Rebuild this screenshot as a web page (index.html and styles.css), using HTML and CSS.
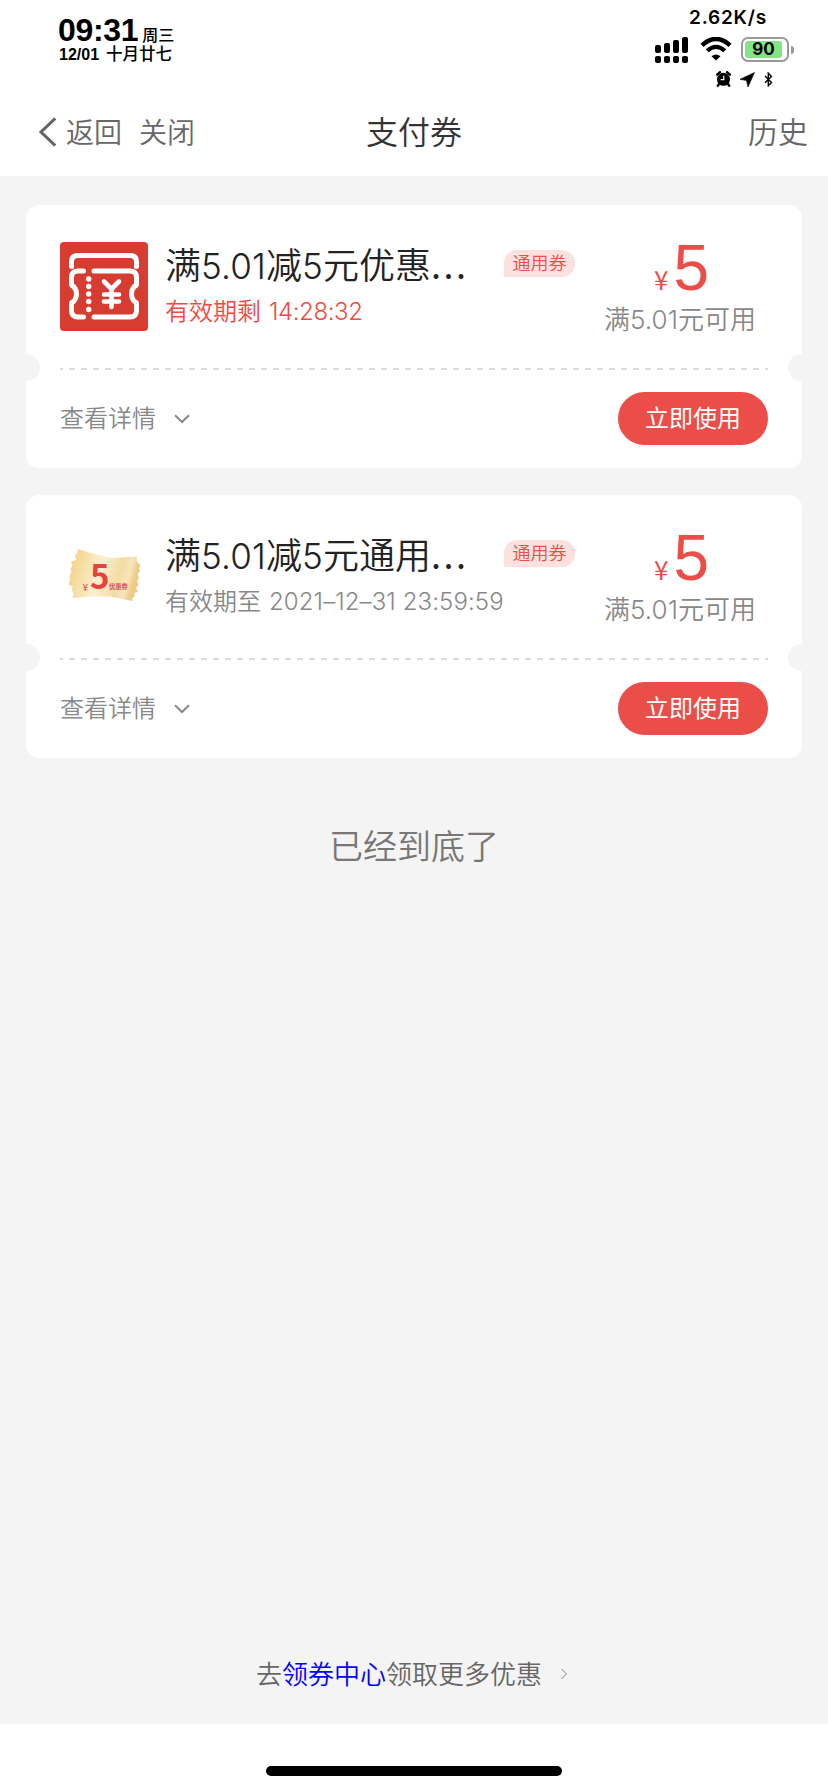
FILE: index.html
```html
<!DOCTYPE html>
<html lang="zh-CN">
<head>
<meta charset="utf-8">
<title>支付券</title>
<link rel="stylesheet" href="styles.css">
</head>
<body>
<div class="screen">
  <header class="top">
    <div class="status">
      <div class="clock">
        <div class="time-row"><span class="time">09:31</span><span class="weekday">周三</span></div>
        <div class="date-row"><span class="date">12/01</span><span class="lunar">十月廿七</span></div>
      </div>
      <div class="indicators">
        <div class="speed">2.62K/s</div>
        <div class="signals">
          <svg class="bars" width="33" height="26" viewBox="0 0 33 26">
            <rect x="0" y="8" width="6" height="8" rx="2"/><rect x="9" y="6" width="6" height="10" rx="2"/><rect x="18" y="3" width="6" height="13" rx="2"/><rect x="27" y="0" width="6" height="16" rx="2"/>
            <rect x="0" y="19" width="6" height="7" rx="2"/><rect x="9" y="19" width="6" height="7" rx="2"/><rect x="18" y="19" width="6" height="7" rx="2"/><rect x="27" y="19" width="6" height="7" rx="2"/>
          </svg>
          <svg class="wifi" width="32" height="24" viewBox="0 0 32 24">
            <path d="M2 8.3Q16-4.600 30 8.300" fill="none" stroke="#000" stroke-width="4.400"/>
            <path d="M7.200 13.800Q16 6 24.800 13.800" fill="none" stroke="#000" stroke-width="4.200"/>
            <path d="M11.500 19.300Q16 15.500 20.500 19.300L16 23.600Z"/>
          </svg>
          <div class="battery"><div class="level">90</div></div><i class="battery-tip"></i>
        </div>
        <div class="mini">
          <svg width="15" height="16" viewBox="0 0 15 16"><circle cx="7.500" cy="8.300" r="6.500"/><path d="M1.200 3.700 4 1.200M13.800 3.700 11 1.200M3 13 1.800 14.700M12 13l1.200 1.700" stroke="#000" stroke-width="2.400" stroke-linecap="round"/><path d="M7.800 4.800v3.900H4.700" fill="none" stroke="#fff" stroke-width="1.200"/></svg>
          <svg width="15" height="15" viewBox="0 0 15 15"><path d="M14.500.5 0 7.300l6.500 1.200L8 15Z" stroke="#000" stroke-width=".6"/></svg>
          <svg width="9" height="15" viewBox="0 0 9 15"><path d="M1 4 7.500 10.500 4.300 13.800V1.200L7.500 4.400 1 10.800" fill="none" stroke="#000" stroke-width="1.400"/></svg>
        </div>
      </div>
    </div>
    <nav class="nav">
      <div class="nav-left">
        <svg width="18" height="30" viewBox="0 0 18 30"><path d="M16.300 1.300 2 15l14.300 13.700" fill="none" stroke="#666" stroke-width="3"/></svg>
        <span class="back">返回</span><span class="close">关闭</span>
      </div>
      <h1 class="title">支付券</h1>
      <span class="history">历史</span>
    </nav>
  </header>

  <main class="content">
    <section class="card">
      <div class="card-main">
        <svg class="logo" width="88" height="89" viewBox="0 0 88 89">
          <rect width="88" height="89" rx="4" fill="#d63d30"/>
          <g fill="none" stroke="#fff" stroke-width="5" stroke-linecap="round" stroke-linejoin="round">
            <path d="M11.500 24.500V20q0-6.500 6.500-6.500h52q6.500 0 6.500 6.500v4.500"/>
            <path d="M23.500 29H18q-6.500 0-6.500 6.500V43q5 3 5 9t-5 9v7.500q0 6.500 6.500 6.500h5.500"/>
            <path d="M34 29h36q6.500 0 6.500 6.500V43q-5 3-5 9t5 9v7.500q0 6.500-6.500 6.500H34"/>
            <path d="M44 39.500 51.500 47 59 39.500M51.500 48v17M44 52.500h15M44 59.500h15" stroke-width="4.600"/>
          </g>
          <g fill="#fff"><circle cx="28.700" cy="37" r="2.700"/><circle cx="28.700" cy="44.500" r="2.700"/><circle cx="28.700" cy="52" r="2.700"/><circle cx="28.700" cy="59.500" r="2.700"/><circle cx="28.700" cy="67.500" r="2.700"/></g>
        </svg>
        <div class="info">
          <div class="name">满<span class="num">5.01</span>减<span class="num">5</span>元优惠<span class="dots">...</span></div>
          <div class="expiry urgent">有效期剩<span class="when">14:28:32</span></div>
        </div>
        <span class="tag">通用券</span>
        <div class="worth">
          <div class="price"><span class="yen">¥</span><span class="amount">5</span></div>
          <div class="rule">满<span class="num">5.01</span>元可用</div>
        </div>
      </div>
      <div class="tear"></div>
      <div class="card-foot">
        <span class="details">查看详情</span>
        <svg class="chevron" width="16" height="10" viewBox="0 0 16 10"><path d="M1 1.200 8 8l7-6.800" fill="none" stroke="#888" stroke-width="2"/></svg>
        <button class="use">立即使用</button>
      </div>
    </section>

    <section class="card">
      <div class="card-main">
        <svg class="logo" width="88" height="89" viewBox="0 0 88 89">
          <defs><linearGradient id="gold" x1="0" y1="0" x2="1" y2=".2"><stop offset="0" stop-color="#efcb80"/><stop offset=".15" stop-color="#f5d793"/><stop offset=".5" stop-color="#fcefd0"/><stop offset=".78" stop-color="#f4dba0"/><stop offset=".9" stop-color="#f7e5bd"/><stop offset="1" stop-color="#eccb83"/></linearGradient></defs>
          <path d="M17.500 17 38 23 52 26 77 24.500 76.500 28 78 31 80.500 33 79 36 80 39 77.500 42 79 46 77 49 78.500 53 76 56 78 60 74 61 75 64 72 67 72.500 69 50 64.500 32 64.500 12.500 66 13.500 62 12 58 12.500 54 8.500 53 10 48 9.500 44 11.500 40 10.500 37 12.500 34 11 30 16 28 15 23 17.500 21Z" fill="url(#gold)"/>
          <text x="22.500" y="58.500" class="pic-yen">¥</text>
          <text x="30" y="57" class="pic-five">5</text>
          <text x="49" y="57" class="pic-label">优惠券</text>
        </svg>
        <div class="info">
          <div class="name">满<span class="num">5.01</span>减<span class="num">5</span>元通用<span class="dots">...</span></div>
          <div class="expiry">有效期至<span class="when full-date">2021–12–31 23:59:59</span></div>
        </div>
        <span class="tag">通用券</span>
        <div class="worth">
          <div class="price"><span class="yen">¥</span><span class="amount">5</span></div>
          <div class="rule">满<span class="num">5.01</span>元可用</div>
        </div>
      </div>
      <div class="tear"></div>
      <div class="card-foot">
        <span class="details">查看详情</span>
        <svg class="chevron" width="16" height="10" viewBox="0 0 16 10"><path d="M1 1.200 8 8l7-6.800" fill="none" stroke="#888" stroke-width="2"/></svg>
        <button class="use">立即使用</button>
      </div>
    </section>

    <p class="end">已经到底了</p>
    <div class="more">去<a>领券中心</a>领取更多优惠<svg width="8" height="12" viewBox="0 0 8 12"><path d="M1.500 1 6.500 6l-5 5" fill="none" stroke="#888" stroke-width="1"/></svg></div>
  </main>
  <footer class="home"><i class="home-bar"></i></footer>
</div>
</body>
</html>
```

FILE: styles.css
```css
* { box-sizing: border-box; }
body {
  margin: 0;
  background: #fff;
  font-family: "Noto Sans CJK SC", sans-serif;
  font-weight: 350;
}
.screen { display: flex; flex-direction: column; width: 828px; height: 1792px; overflow: hidden; }

/* status bar */
.top { height: 176px; flex: none; background: #fff; color: #000; }
.status { display: flex; justify-content: space-between; height: 96px; padding: 0 34px 0 58px; }
.clock { padding-top: 15px; }
.time-row { display: flex; align-items: baseline; height: 30px; line-height: 30px; }
.time { font: bold 32px/30px "Liberation Sans", Arial, sans-serif; letter-spacing: -.3px; }
.weekday { margin-left: 4px; font-size: 16px; font-weight: 500; }
.date-row { display: flex; align-items: baseline; height: 17px; line-height: 17px; padding-left: 1px; }
.date { font: bold 16px/17px "Liberation Sans", Arial, sans-serif; }
.lunar { margin-left: 7px; font-size: 16.500px; font-weight: 500; }
.indicators { width: 140px; }
.speed { height: 37px; padding: 7px 0 0 35px; font: 600 19px/22px Inter, sans-serif; letter-spacing: .8px; white-space: nowrap; }
.signals { display: flex; align-items: flex-start; }
.bars { margin-left: 1px; }
.wifi { margin-left: 12px; }
.battery { width: 48px; height: 25px; margin-left: 9px; padding: 2px; border: 2px solid #999; border-radius: 7px; }
.level { width: 37px; height: 17px; margin: 0 auto 0 0; border-radius: 3px; background: #83e483; font: 700 17px/17px Inter, sans-serif; text-align: center; }
.battery-tip { width: 3px; height: 8px; margin: 9px 0 0 2px; border-radius: 0 4px 4px 0; background: #999; }
.mini { display: flex; align-items: center; gap: 9px; height: 16px; margin-top: 8px; padding-left: 62px; }

/* navigation */
.nav { display: grid; grid-template-columns: 1fr auto 1fr; align-items: center; height: 72px; padding: 0 20px 0 39px; color: #666; }
.nav-left { display: flex; align-items: center; width: 200px; }
.back { margin: -2px 0 0 9px; font-size: 28px; line-height: 40px; }
.close { margin: -2px 0 0 17px; font-size: 28px; line-height: 40px; }
.title { margin: -4px 0 0 -19px; color: #333; font-size: 32px; line-height: 40px; font-weight: 350; }
.history { justify-self: end; margin-top: -4px; font-size: 30px; line-height: 40px; }

/* coupons */
.content { display: flex; flex-direction: column; flex: 1; padding: 29px 26px 0; background: #f4f4f4; }
.card { position: relative; height: 263px; margin-bottom: 27px; padding: 0 34px; border-radius: 13px; background: #fff; }
.card::before, .card::after { content: ""; position: absolute; top: 149px; width: 27px; height: 27px; border-radius: 50%; background: #f4f4f4; }
.card::before { left: -13px; }
.card::after { right: -13px; }
.card-main { display: flex; height: 163px; padding-top: 37px; }
.logo { flex: none; }
.info { flex: none; width: 338px; padding-left: 17px; margin-right: 18px; white-space: nowrap; }
.name { height: 44px; margin-top: -1px; color: #222; font-size: 36px; line-height: 44px; }
.name .num { font-family: Inter, sans-serif; font-size: 35px; letter-spacing: .2px; }
.dots { font-weight: 400; letter-spacing: 2.500px; }
.expiry { height: 34px; margin-top: 8px; color: #888; font-size: 24px; line-height: 34px; }
.urgent { color: #f04a45; }
.when { margin-left: 8px; font-family: Inter, sans-serif; letter-spacing: -.4px; }
.full-date { letter-spacing: .1px; }
.tag { flex: none; width: 71px; height: 27px; margin-top: 8px; border-radius: 13px 13px 13px 0; background: #fde1df; color: #eb4e48; font-size: 18px; line-height: 24px; text-align: center; }
.worth { flex: none; width: 176px; margin-left: 17px; color: #eb4e48; text-align: center; }
.price { display: flex; align-items: baseline; justify-content: center; height: 55px; line-height: 55px; padding-left: 3px; }
.yen { font-size: 26px; font-weight: 400; margin-right: 5px; }
.amount { font: 400 64px/53px "Liberation Sans", Arial, sans-serif; }
.rule { margin-top: 4px; color: #888; font-size: 26px; line-height: 34px; }
.rule .num { font-family: Inter, sans-serif; letter-spacing: .1px; }
.tear { height: 2px; background: repeating-linear-gradient(90deg, #ddd 0 6px, transparent 6px 12px) -3px 0; }
.card-foot { display: flex; align-items: center; height: 96px; padding-top: 2px; }
.details { margin-top: -4px; color: #888; font-size: 24px; line-height: 34px; }
.chevron { margin-left: 18px; }
.use { width: 150px; height: 53px; margin: -1px 0 0 auto; padding: 0 0 4px; border: 0; border-radius: 27px; background: #eb4e48; color: #fff; font: 400 24px/34px "Noto Sans CJK SC", sans-serif; }
.end { margin: 36px 0 0; color: #777; font-size: 34px; line-height: 48px; text-align: center; }
.more { display: flex; align-items: center; height: 40px; margin: auto 0 31px 230px; color: #666; font-size: 26px; line-height: 40px; }
.more a { color: #00f; }
.more svg { margin: 2px 0 0 18px; }
.home { display: flex; justify-content: center; height: 68px; flex: none; padding-top: 42px; background: #fff; }
.home-bar { width: 296px; height: 10px; border-radius: 5px; background: #000; }

.pic-yen { font: 400 10px "Noto Sans CJK SC", sans-serif; fill: #ea4a48; }
.pic-five { font: 700 33px "Noto Sans CJK SC", sans-serif; fill: #ea4140; }
.pic-label { font: bold 6.300px "Noto Sans CJK SC", sans-serif; fill: #ea4a60; }
```
